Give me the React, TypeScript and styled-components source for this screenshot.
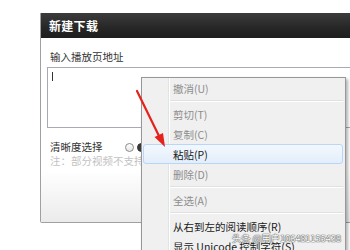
import React from 'react';
import styled, { createGlobalStyle } from 'styled-components';

const GlobalStyle = createGlobalStyle`
	html, body {
		margin: 0;
		padding: 0;
		background: #ffffff;
		overflow: hidden;
	}
	body {
		font-family: 'Noto Sans CJK SC', 'Noto Sans', sans-serif;
	}
`;

const Desktop = styled.div`
	position: relative;
	width: 350px;
	height: 250px;
	overflow: hidden;
	background: #ffffff;
`;

const Dialog = styled.div`
	position: absolute;
	left: 40px;
	top: 13px;
	width: 330px;
	height: 210px;
	display: flex;
	flex-direction: column;
	border: 1px solid #a0a0a0;
	border-top: none;
	border-radius: 0 0 2px 2px;
	box-sizing: border-box;
	overflow: hidden;
`;

const TitleBar = styled.div`
	height: 25px;
	flex-shrink: 0;
	display: flex;
	align-items: center;
	padding-left: 8px;
	background: linear-gradient(#3c3c3c, #262626 60%, #1e1e1e);
	color: #ffffff;
	font-size: 12px;
	font-weight: 700;
	letter-spacing: 0.3px;
`;

const DialogBody = styled.div`
	flex: 1;
	display: flex;
	flex-direction: column;
	padding: 12px 0 0 6px;
	background: linear-gradient(#ffffff 0%, #ffffff 72%, #ebebeb 100%);
`;

const FieldLabel = styled.div`
	margin-left: 3px;
	height: 14px;
	line-height: 14px;
	font-size: 10.5px;
	color: #333333;
`;

const UrlBox = styled.div`
	margin-top: 3px;
	width: 310px;
	height: 61px;
	box-sizing: border-box;
	border: 1px solid #a8abb2;
	background: #ffffff;
	padding: 4px 0 0 4px;
`;

const Caret = styled.div`
	width: 1px;
	height: 9px;
	background: #333333;
`;

const QualityRow = styled.div`
	margin-top: 12px;
	display: flex;
	align-items: center;
	height: 14px;
	padding-left: 3px;
`;

const RowLabel = styled.span`
	font-size: 10.5px;
	line-height: 14px;
	color: #333333;
	width: 75px;
`;

const Radio = styled.span<{ $checked?: boolean }>`
	display: inline-block;
	width: 9px;
	height: 9px;
	border-radius: 50%;
	box-sizing: border-box;
	border: 1px solid ${({ $checked }) => ($checked ? '#333' : '#8a8a8a')};
	background: ${({ $checked }) =>
		$checked ? '#3a3a3a' : 'linear-gradient(#ffffff, #e6e6e6)'};
	margin-right: 3px;
`;

const Note = styled.div`
	margin: 1px 0 0 3px;
	height: 12px;
	line-height: 12px;
	font-size: 10.5px;
	color: #c2c2c2;
	white-space: nowrap;
`;

const Menu = styled.div`
	position: absolute;
	left: 141px;
	top: 77px;
	width: 205px;
	height: 200px;
	box-sizing: border-box;
	border: 1px solid #979797;
	background:
		linear-gradient(
			to right,
			transparent 26px,
			#e2e3e3 26px,
			#e2e3e3 27px,
			#ffffff 27px,
			#ffffff 28px,
			transparent 28px
		),
		#f0f0f0;
	box-shadow: 2px 2px 3px rgba(0, 0, 0, 0.3);
	display: flex;
	flex-direction: column;
`;

const MenuItem = styled.div<{ $disabled?: boolean; $hover?: boolean }>`
	height: 20px;
	margin: 0 2px 0 1px;
	padding-left: 29px;
	box-sizing: border-box;
	display: flex;
	align-items: center;
	font-size: 10.5px;
	white-space: nowrap;
	color: ${({ $disabled }) => ($disabled ? '#8d8d8d' : '#1a1a1a')};
	border: 1px solid ${({ $hover }) => ($hover ? '#b8d6fb' : 'transparent')};
	border-radius: 3px;
	background: ${({ $hover }) =>
		$hover ? 'linear-gradient(#f2f7fd, #e3eefb)' : 'transparent'};
`;

const Separator = styled.div`
	height: 6px;
	margin-left: 28px;
	margin-right: 2px;
	display: flex;
	flex-direction: column;
	justify-content: center;

	&::before {
		content: '';
		height: 1px;
		background: #e0e0e0;
	}
	&::after {
		content: '';
		height: 1px;
		background: #ffffff;
	}
`;

const Arrow = styled.svg`
	position: absolute;
	left: 0;
	top: 0;
	pointer-events: none;
`;

const Watermark = styled.div`
	position: absolute;
	left: 232px;
	top: 231px;
	font-size: 9.5px;
	letter-spacing: -0.2px;
	color: #ffffff;
	text-shadow:
		0 0 1px #555,
		0 0 1px #555,
		0 0 1px #555;
	white-space: nowrap;
`;

const menuRows: Array<{ label?: string; disabled?: boolean; hover?: boolean; sep?: boolean }> = [
	{ label: '撤消(U)', disabled: true },
	{ sep: true },
	{ label: '剪切(T)', disabled: true },
	{ label: '复制(C)', disabled: true },
	{ label: '粘贴(P)', hover: true },
	{ label: '删除(D)', disabled: true },
	{ sep: true },
	{ label: '全选(A)', disabled: true },
	{ sep: true },
	{ label: '从右到左的阅读顺序(R)' },
	{ label: '显示 Unicode 控制字符(S)' },
];

export default function App() {
	return (
		<>
			<GlobalStyle />
			<Desktop>
				<Dialog>
					<TitleBar>新建下载</TitleBar>
					<DialogBody>
						<FieldLabel>输入播放页地址</FieldLabel>
						<UrlBox>
							<Caret />
						</UrlBox>
						<QualityRow>
							<RowLabel>清晰度选择</RowLabel>
							<Radio />
							<Radio $checked />
						</QualityRow>
						<Note>注：部分视频不支持清晰度选择</Note>
					</DialogBody>
				</Dialog>

				<Menu>
					{menuRows.map((r, i) =>
						r.sep ? (
							<Separator key={i} />
						) : (
							<MenuItem key={i} $disabled={r.disabled} $hover={r.hover}>
								{r.label}
							</MenuItem>
						)
					)}
				</Menu>

				<Arrow width="350" height="250" viewBox="0 0 350 250">
					<line x1="137" y1="91" x2="159" y2="136" stroke="#e3231c" strokeWidth="2.2" strokeLinecap="round" />
					<polygon points="165,147 154.5,137 163,133" fill="#e3231c" />
				</Arrow>

				<Watermark>头条 @用户106481155438</Watermark>
			</Desktop>
		</>
	);
}
